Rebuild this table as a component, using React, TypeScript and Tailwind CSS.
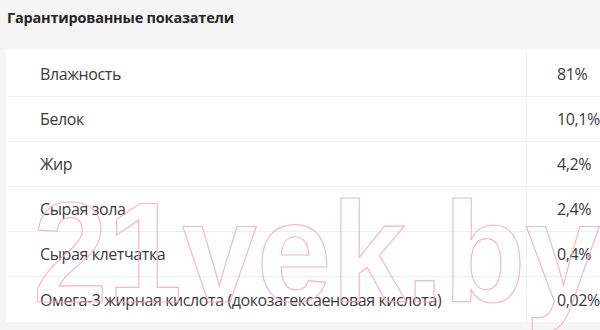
import React from "react";

const rows: [string, string][] = [
  ["Влажность", "81%"],
  ["Белок", "10,1%"],
  ["Жир", "4,2%"],
  ["Сырая зола", "2,4%"],
  ["Сырая клетчатка", "0,4%"],
  ["Омега-3 жирная кислота (докозагексаеновая кислота)", "0,02%"],
];

export default function App() {
  return (
    <div className="relative w-[600px] h-[330px] overflow-hidden bg-[#f5f5f5] font-['Open_Sans',sans-serif]">
      <div className="h-[49px] pl-[7px] pt-[6px] text-[14.5px] font-bold text-[#262626] leading-[24px] tracking-[-0.2px]">
        Гарантированные показатели
      </div>
      <div className="ml-[6px] bg-white pt-[3px] pl-[2px]">
        {rows.map(([k, v], i) => (
          <div
            key={k}
            className={
              "flex h-[45px] items-center text-[16px] text-[#3b3b3b] " +
              (i < rows.length - 1 ? "border-b border-[#efefef]" : "")
            }
          >
            <div className="flex h-full w-[519px] items-center border-r border-[#efefef] pl-[32px] tracking-[-0.4px]">
              {k}
            </div>
            <div className="pl-[30px] tracking-[-0.4px]">{v}</div>
          </div>
        ))}
      </div>
      <svg
        className="pointer-events-none absolute left-0 top-0"
        width="600"
        height="330"
        viewBox="0 0 600 330"
      >
        <text
          x="33"
          y="302"
          textLength="567"
          lengthAdjust="spacingAndGlyphs"
          fontFamily="'Liberation Sans', Arial, sans-serif"
          fontWeight="700"
          fontSize="142"
          fill="none"
          stroke="#f7a8c2"
          strokeWidth="1.2"
          opacity="0.85"
        >
          21vek.by
        </text>
      </svg>
    </div>
  );
}
